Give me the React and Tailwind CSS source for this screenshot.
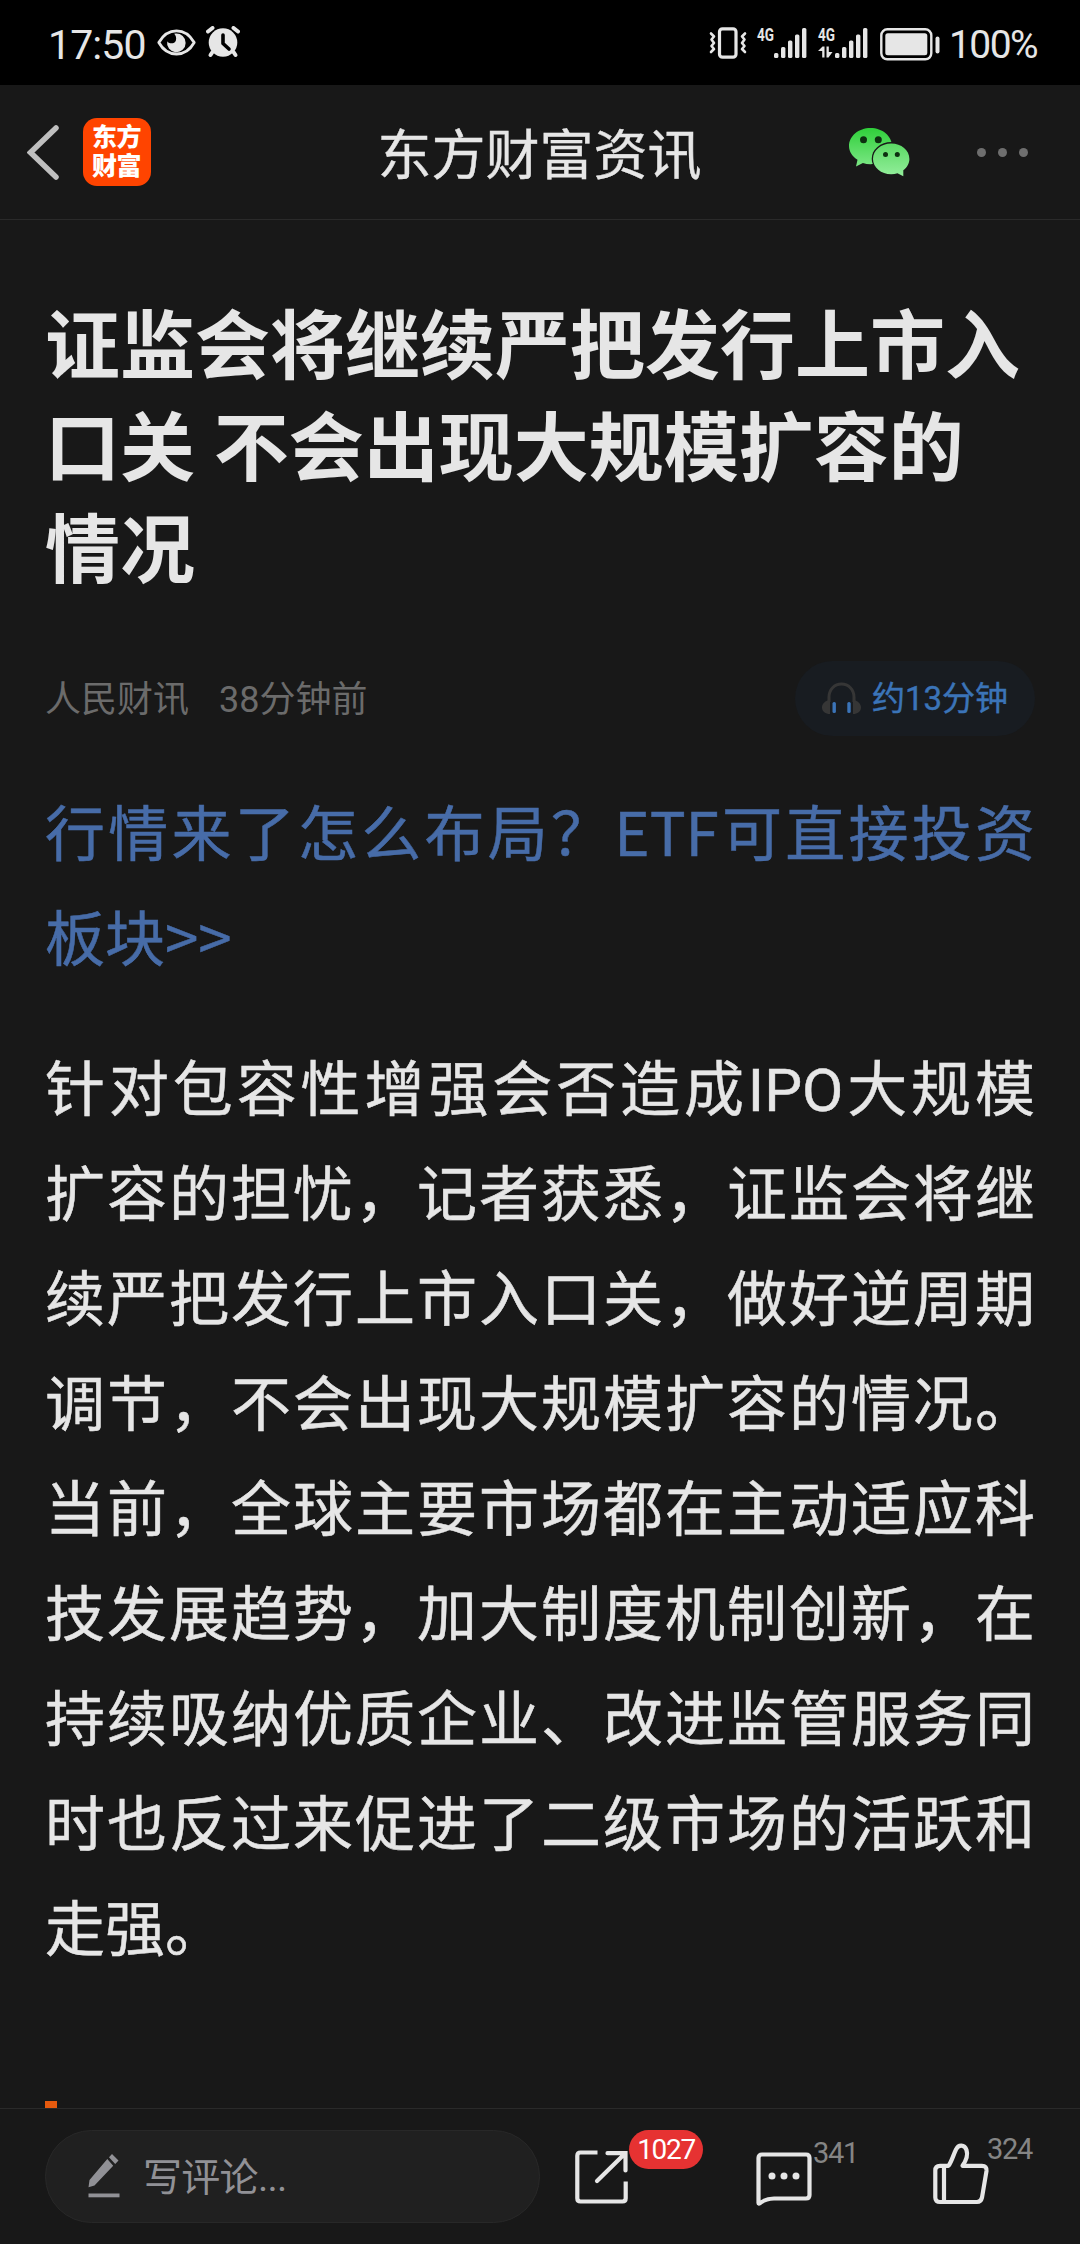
const ARTICLE = {
  title: ['证监会将继续严把发行上市入', '口关 不会出现大规模扩容的', '情况'],
  source: '人民财讯',
  time: '38分钟前',
  listen: '约13分钟',
  promo: ['行情来了怎么布局？ETF可直接投资', '板块>>'],
  body: [
    '针对包容性增强会否造成IPO大规模',
    '扩容的担忧，记者获悉，证监会将继',
    '续严把发行上市入口关，做好逆周期',
    '调节，不会出现大规模扩容的情况。',
    '当前，全球主要市场都在主动适应科',
    '技发展趋势，加大制度机制创新，在',
    '持续吸纳优质企业、改进监管服务同',
    '时也反过来促进了二级市场的活跃和',
    '走强。',
  ],
};

// --- STATUS BAR ---
const EyeIcon = () => (
  <svg className="ml-3 -mt-px" width="39" height="27" viewBox="0 0 39 27" fill="none">
    <path d="M1.8 13.5C6 6 12 1.8 19.5 1.8S33 6 37.2 13.5C33 21 27 25 19.5 25S6 21 1.8 13.5Z" stroke="#e6e6e6" strokeWidth="2.8" strokeLinejoin="round" />
    <path d="M18.6 4.6A9.3 9.3 0 1 1 10.2 12.2C11.6 15 17.8 15.2 18.9 11.4C19.6 9 18.9 6.6 17.2 4.8Z" fill="#e6e6e6" />
  </svg>
);

const AlarmIcon = () => (
  <svg className="ml-[10px] -mt-px" width="34" height="32" viewBox="0 0 34 32" fill="none">
    <circle cx="17" cy="16.5" r="14.3" fill="#e6e6e6" />
    <path d="M2 5.5L6.5 2M32 5.5L27.5 2" stroke="#e6e6e6" strokeWidth="4" strokeLinecap="round" />
    <path d="M6.5 26L4.5 29M27.5 26L29.5 29" stroke="#e6e6e6" strokeWidth="4" strokeLinecap="round" />
    <path d="M17 9V17.5L23 23" stroke="#000" strokeWidth="3.6" strokeLinecap="round" strokeLinejoin="round" />
  </svg>
);

const VibrateIcon = () => (
  <svg width="38" height="32" viewBox="0 0 38 32" fill="none" stroke="#e6e6e6" strokeLinecap="round" strokeLinejoin="round">
    <rect x="10.5" y="1.8" width="16.5" height="28.4" rx="3" strokeWidth="3.2" />
    <path d="M2 6.5L5 9.5L2.5 12.5L5 16L2.5 19L5 22L2 25" strokeWidth="2.6" />
    <path d="M36 6.5L33 9.5L35.5 12.5L33 16L35.5 19L33 22L36 25" strokeWidth="2.6" />
  </svg>
);

const SignalIcon = ({ data }) => (
  <svg className="overflow-visible" width="50" height="32" viewBox="0 0 50 32">
    <text x="0" y="14" textLength="17" lengthAdjust="spacingAndGlyphs" fill="#e6e6e6" fontFamily="Roboto, sans-serif" fontWeight="700" fontSize="18.5">4G</text>
    {data && <path d="M0 24L4.5 19.5H6.5V30.5H4.2V24ZM8.5 19.5H10.8V25H14.5L10.5 30.5H8.5Z" fill="#e6e6e6" />}
    <rect x="17" y="26" width="4.4" height="5" rx="1.5" fill="#e6e6e6" />
    <rect x="24" y="20" width="4.4" height="11" rx="1.5" fill="#e6e6e6" />
    <rect x="31" y="13.5" width="4.4" height="17.5" rx="1.5" fill="#e6e6e6" />
    <rect x="38" y="7.5" width="4.4" height="23.5" rx="1.5" fill="#e6e6e6" />
    <rect x="45" y="1" width="4.4" height="30" rx="1.5" fill="#e6e6e6" />
  </svg>
);

const BatteryIcon = () => (
  <svg width="60" height="33" viewBox="0 0 60 33" fill="none">
    <rect x="1.3" y="1.3" width="50" height="30" rx="6" stroke="#e6e6e6" strokeWidth="2.4" />
    <rect x="5.3" y="5.3" width="42" height="22" rx="2.5" fill="#e6e6e6" />
    <rect x="55.5" y="8.5" width="4" height="17" rx="2" fill="#e6e6e6" />
  </svg>
);

const StatusBar = () => (
  <div className="flex h-[85px] items-center bg-black pl-12 pr-[41px] text-[#e6e6e6]">
    <span className="w-[97px] whitespace-nowrap pt-[5px] text-[41px] leading-none tracking-[-0.9px]">17:50</span>
    <EyeIcon />
    <AlarmIcon />
    <div className="ml-auto flex items-center">
      <VibrateIcon />
      <div className="ml-[10px]"><SignalIcon /></div>
      <div className="ml-[11px]"><SignalIcon data /></div>
      <div className="ml-3 mt-[3px]"><BatteryIcon /></div>
      <span className="ml-[9px] w-[90px] whitespace-nowrap pt-[6px] text-[39px] leading-none tracking-[-1.6px]">100%</span>
    </div>
  </div>
);

// --- HEADER ---
const WechatIcon = () => (
  <svg width="61" height="49" viewBox="0 0 61 49">
    <defs>
      <linearGradient id="wx-a" x1="0" y1="0" x2="0" y2="1">
        <stop offset="0" stopColor="#2fcf3a" />
        <stop offset="1" stopColor="#7ce785" />
      </linearGradient>
      <linearGradient id="wx-b" x1="0" y1="0" x2="0" y2="1">
        <stop offset="0" stopColor="#5bd964" />
        <stop offset="1" stopColor="#93ee9b" />
      </linearGradient>
    </defs>
    <path d="M21.5 0C33.4 0 43 8 43 18S33.4 36.2 21.5 36.2C18.8 36.2 16.2 35.8 13.9 35L7 38.5L8.5 31.8C3.4 28.5 0 23.6 0 18C0 8 9.6 0 21.5 0Z" fill="url(#wx-a)" />
    <ellipse cx="42.2" cy="30.8" rx="19.5" ry="16.8" fill="#181818" />
    <path d="M42.2 15.6C52.3 15.6 60.4 22.4 60.4 30.9C60.4 35.4 58 39.5 54.3 42.2V48.2L48.5 45.3C46.5 45.9 44.4 46.2 42.2 46.2C32.2 46.2 24 39.4 24 30.9S32.2 15.6 42.2 15.6Z" fill="url(#wx-b)" />
    <circle cx="14.5" cy="11.8" r="3.5" fill="#0d2f10" />
    <circle cx="29.3" cy="11.8" r="3.5" fill="#0d2f10" />
    <circle cx="36.5" cy="26.6" r="2.5" fill="#0d2f10" />
    <circle cx="48.3" cy="26.6" r="2.5" fill="#0d2f10" />
  </svg>
);

const Header = () => (
  <header className="grid h-[135px] grid-cols-[1fr_auto_1fr] items-center border-b border-[#2a2a2a]">
    <div className="flex items-center pl-[27px]">
      <svg width="32" height="55" viewBox="0 0 32 55" fill="none">
        <path d="M29 3L3.5 27.5L29 52" stroke="#bfbfbf" strokeWidth="5.5" strokeLinecap="round" />
      </svg>
      <div className="ml-6 flex h-[68px] w-[68px] flex-col items-center justify-center rounded-[14px] bg-[#ff4400] pr-px text-[25px] font-black leading-[29px] tracking-[-0.5px] text-white">
        <span>东方</span>
        <span>财富</span>
      </div>
    </div>
    <h1 className="pr-px pt-[10px] text-[54px] leading-none text-[#e6e6e6] [-webkit-text-stroke:0.4px]">东方财富资讯</h1>
    <div className="flex items-center justify-end pr-[52px]">
      <WechatIcon />
      <div className="ml-[67px] flex gap-3">
        <i className="h-[9px] w-[9px] rounded-full bg-[#6e6e6e]" />
        <i className="h-[9px] w-[9px] rounded-full bg-[#6e6e6e]" />
        <i className="h-[9px] w-[9px] rounded-full bg-[#6e6e6e]" />
      </div>
    </div>
  </header>
);

// --- ARTICLE ---
const Paragraph = ({ lines, className }) => (
  <p className={`text-[60px] leading-[105px] [-webkit-text-stroke:0.5px] ${className}`}>
    {lines.map((line, i) => (
      <span
        key={line}
        className={`block whitespace-nowrap ${i < lines.length - 1 ? '[text-align-last:justify]' : ''}`}
      >
        {line}
      </span>
    ))}
  </p>
);

const HeadphoneIcon = () => (
  <svg width="39" height="33" viewBox="0 0 39 33" fill="none">
    <path d="M7 20V15C7 7.5 12.5 2 19.5 2S32 7.5 32 15V20" stroke="#363636" strokeWidth="3" />
    <path d="M8 18C3.5 18.5 0 21.5 0 25.5S3.500 32 8 32ZM31 18C35.5 18.5 39 21.5 39 25.5S35.5 32 31 32Z" fill="#363636" />
    <rect x="10.5" y="20" width="3.4" height="11" rx="1.5" fill="#3b74b8" />
    <rect x="25.3" y="20" width="3.4" height="11" rx="1.5" fill="#3b74b8" />
  </svg>
);

const Article = () => (
  <main className="flex-1 overflow-hidden px-[45px] pt-[76px]">
    <h2 className="text-[75px] font-bold leading-[102px] text-[#e6e6e6]">
      {ARTICLE.title.map((line) => (
        <span key={line} className="block whitespace-nowrap">{line}</span>
      ))}
    </h2>
    <div className="mt-[59px] flex h-[75px] items-center text-[36px] text-[#6b6b6b]">
      <span className="pt-[2px]">{ARTICLE.source}</span>
      <span className="ml-[30px] pt-[2px]">{ARTICLE.time}</span>
      <div className="ml-auto flex h-[75px] w-[240px] items-center rounded-full bg-[#181c21] pl-[27px] text-[33px] text-[#3b74b8]">
        <HeadphoneIcon />
        <span className="ml-[11px] whitespace-nowrap [-webkit-text-stroke:0.4px]">{ARTICLE.listen}</span>
      </div>
    </div>
    <Paragraph lines={ARTICLE.promo} className="mt-[41px] font-['Noto_Sans_CJK_SC',sans-serif] text-[#476ca8]" />
    <Paragraph lines={ARTICLE.body} className="mt-[51px] text-[#e6e6e6]" />
    <div className="mt-[118px] h-3 w-3 bg-[#e65a0e]" />
  </main>
);

// --- BOTTOM BAR ---
const PenIcon = () => (
  <svg width="32" height="45" viewBox="0 0 32 45" fill="#919196">
    <path d="M24 0L30.5 6.5L27.2 10L21 3.3ZM19.3 5L25.2 11.8L6.5 31.5L0.5 33.3L1.5 26Z" />
    <rect x="0.5" y="39.5" width="31" height="3.8" />
  </svg>
);

const ShareIcon = () => (
  <svg width="53" height="54" viewBox="0 0 53 54" fill="none" stroke="#e6e6e6" strokeWidth="4.2">
    <path d="M22.5 2.5H5.5Q2.3 2.5 2.3 5.7V48.3Q2.3 51.5 5.5 51.5H47.5Q50.7 51.5 50.7 48.3V31.5" />
    <path d="M32.5 3.2H50.5V20.5M49.5 4L22 31" strokeLinecap="round" />
  </svg>
);

const CommentIcon = () => (
  <svg width="56" height="54" viewBox="0 0 56 54" fill="none">
    <path d="M2.5 51V6Q2.5 2.5 6 2.5H50Q53.5 2.5 53.5 6V43Q53.5 46.5 50 46.5H18Q10 46.5 4 51.2Q2.5 52 2.5 51Z" stroke="#e6e6e6" strokeWidth="4.2" strokeLinejoin="round" />
    <circle cx="16" cy="24" r="3.5" fill="#e6e6e6" />
    <circle cx="28" cy="24" r="3.5" fill="#e6e6e6" />
    <circle cx="40" cy="24" r="3.5" fill="#e6e6e6" />
  </svg>
);

const LikeIcon = () => (
  <svg width="56" height="62" viewBox="0 0 56 62" fill="none" stroke="#e6e6e6" strokeWidth="4.2" strokeLinejoin="round">
    <path d="M7 22.8H15.5C18.5 19 20.5 11.5 23 6.5C25.5 1 31.5 1.5 33.5 7C35 11.5 33.5 17 29.5 22.8H49Q54 22.8 53.5 28L49 54.5Q48 59 44 59H7Q2.3 59 2.3 54.5V27.5Q2.3 22.8 7 22.8Z" />
    <path d="M11 22.8V59" />
  </svg>
);

const BottomBar = () => (
  <footer className="flex h-[136px] items-start border-t border-[#2a2a2a] bg-[#181818] pl-[45px] pt-[21px]">
    <div className="flex h-[93px] w-[495px] items-center rounded-full border border-[#282828] bg-[#202020] pl-[42px] text-[39px] text-[#919196]">
      <PenIcon />
      <span className="ml-[23px] pt-[3px] tracking-[-0.7px]">写评论...</span>
    </div>
    <div className="relative ml-[35px] mt-5">
      <ShareIcon />
      <span className="absolute -top-5 left-[54px] flex h-[39px] w-[74px] items-center justify-center rounded-full bg-[#e63232] text-[28px] tracking-[-1.3px] text-white">1027</span>
    </div>
    <div className="relative ml-32 mt-[22px]">
      <CommentIcon />
      <span className="absolute -top-[15px] left-[57px] text-[29px] leading-[32px] tracking-[-1.3px] text-[#858585]">341</span>
    </div>
    <div className="relative ml-[121px] mt-[13px]">
      <LikeIcon />
      <span className="absolute -top-[10px] left-[54px] text-[29px] leading-[32px] tracking-[-1.3px] text-[#858585]">324</span>
    </div>
  </footer>
);

export default function App() {
  return (
    <div className="flex h-[2244px] w-[1080px] flex-col overflow-hidden bg-[#181818] font-['Roboto','Noto_Sans_CJK_SC',sans-serif]">
      <StatusBar />
      <Header />
      <Article />
      <BottomBar />
    </div>
  );
}
